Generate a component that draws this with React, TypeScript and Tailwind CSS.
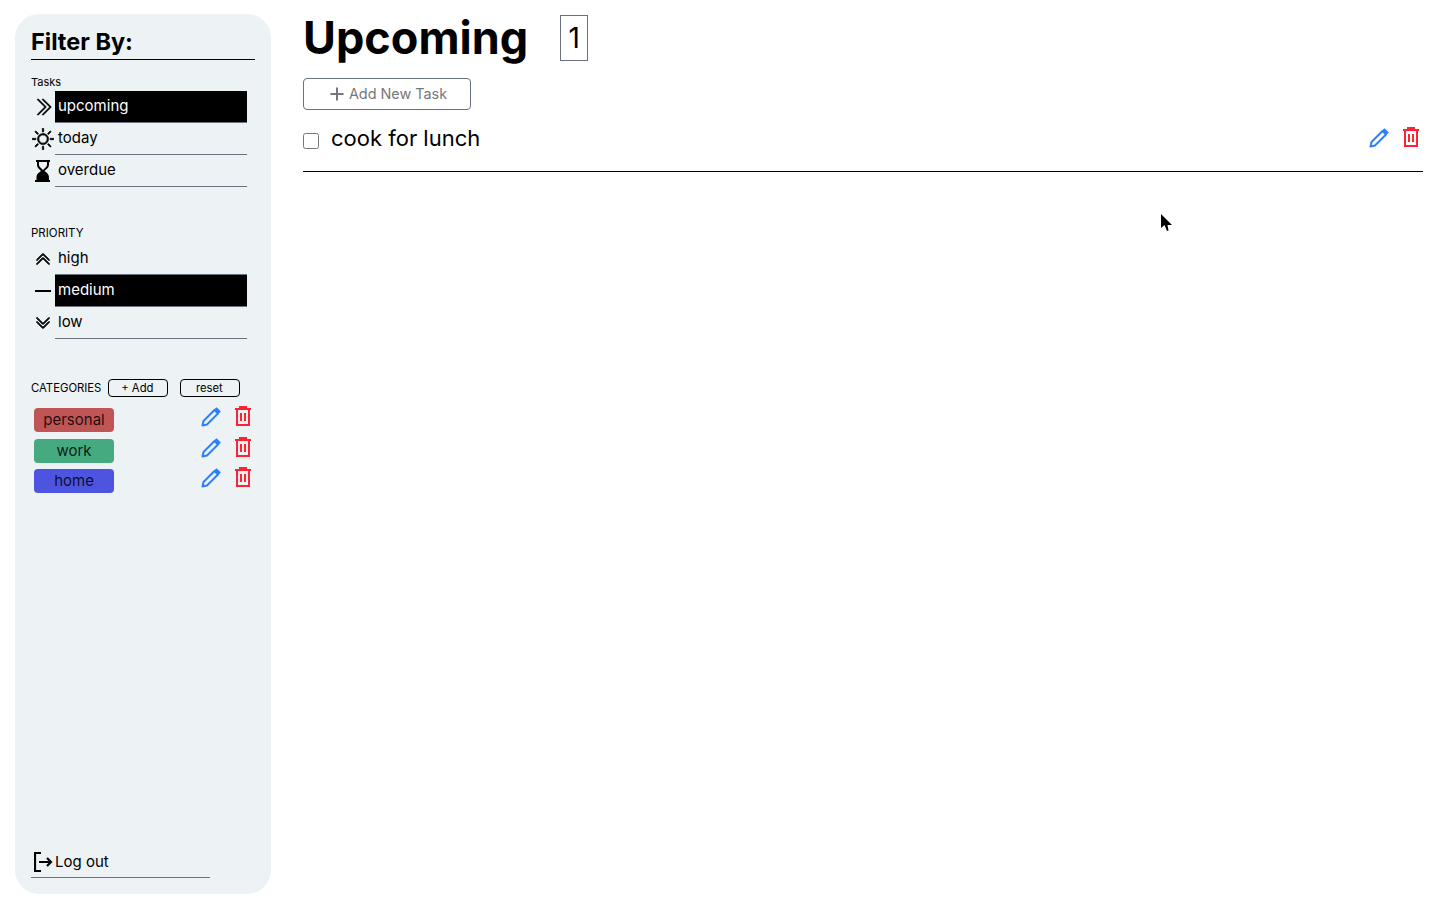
import { Plus } from "lucide-react";
import { BsChevronDoubleDown, BsChevronDoubleRight, BsChevronDoubleUp, BsSun } from "react-icons/bs";
import type { ReactNode } from "react";

const Pencil = () => (
  <svg viewBox="0 0 20 20" className="h-5 w-5 text-[#2b7fff]" fill="none" stroke="currentColor">
    <path d="M1.5 18.500 2.500 14 13.500 3 17 6.500 6 17.500Z" strokeWidth="2" strokeLinejoin="round" />
    <path d="M14 2.500 15.500 1.200 18.800 4.500 17.300 6Z" fill="currentColor" strokeWidth="1.500" />
  </svg>
);

const Trash = () => (
  <svg viewBox="0 0 16 20" className="h-5 w-4 -translate-y-px text-[#ff2233]" fill="none" stroke="currentColor" strokeWidth="2">
    <path d="M0 3h16M5 3V1h6v2M2 3v16h12V3M6 7v8M10 7v8" />
  </svg>
);

const Hourglass = () => (
  <svg viewBox="0 0 16 22" className="h-[22px] w-4" fill="currentColor">
    <path d="M1 0h14v2h-1v3c0 2.500-2.500 4-4.500 6 2 1.500 4.500 3 4.500 6.500V20h1v2H0v-2h1.500v-2.500c0-3.500 2.500-5 4.500-6.500C4 9 2 7.500 2 5V2H1ZM4 2v3c0 1.500 2.500 3.500 4 5 1.500-1.500 4-3.500 4-5V2Z" />
  </svg>
);

const FilterRow = ({ icon, label, active }: { icon: ReactNode; label: string; active?: boolean }) => (
  <div className="flex h-8 items-center">
    <div className="flex w-6 justify-center text-black">{icon}</div>
    <div
      className={
        active
          ? "flex h-8 w-[192px] items-center border-b border-gray-500 bg-black pb-[1px] pl-[3px] text-white"
          : "flex h-8 w-[192px] items-center border-b border-gray-500 pb-[1px] pl-[3px] text-black"
      }
    >
      {label}
    </div>
  </div>
);

const CategoryRow = ({ label, color }: { label: string; color: string }) => (
  <div className="flex h-[30.5px] items-center pl-[3px]">
    <div className={`flex h-6 w-20 items-center justify-center rounded text-[15px] text-black/85 ${color}`}>
      {label}
    </div>
    <div className="ml-[87px] flex items-center gap-[14px] -translate-y-[3px]">
      <Pencil />
      <Trash />
    </div>
  </div>
);

export default function App() {
  return (
    <div className="relative flex h-[909px] bg-white font-['Inter',sans-serif] text-black">
      <aside className="ml-[15px] mt-[14px] flex h-[880px] w-[256px] flex-col rounded-3xl bg-[#edf2f5] pl-4 text-[15px]">
        <h2 className="mr-4 mt-[12px] h-[34px] border-b border-black pt-[2px] text-[23.5px] leading-[28px] font-bold">Filter By:</h2>
        <p className="mt-[15px] text-[11px] leading-[14px]">Tasks</p>
        <div className="mt-[2px]">
          <FilterRow icon={<BsChevronDoubleRight className="text-xl stroke-current stroke-[0.5px]" />} label="upcoming" active />
          <FilterRow icon={<BsSun className="text-[22px] stroke-current stroke-[0.5px]" />} label="today" />
          <FilterRow icon={<Hourglass />} label="overdue" />
        </div>
        <p className="mt-[39px] text-[11.5px] leading-[14px]">PRIORITY</p>
        <div className="mt-[3px]">
          <FilterRow icon={<BsChevronDoubleUp className="text-base stroke-current stroke-[1px]" />} label="high" />
          <FilterRow icon={<div className="h-[2px] w-4 bg-black" />} label="medium" active />
          <FilterRow icon={<BsChevronDoubleDown className="text-base stroke-current stroke-[1px]" />} label="low" />
        </div>
        <div className="mt-10 flex items-center text-[11.3px]">
          <span>CATEGORIES</span>
          <button className="ml-[7px] h-[18px] w-[60px] rounded border border-black pr-[2px]">+ Add</button>
          <button className="ml-3 h-[18px] w-[60px] rounded border border-black pr-[2px]">reset</button>
        </div>
        <div className="mt-2">
          <CategoryRow label="personal" color="bg-[#c05555]" />
          <CategoryRow label="work" color="bg-[#45aa7f]" />
          <CategoryRow label="home" color="bg-[#4d55e0]" />
        </div>
        <div className="mb-4 mt-auto flex h-8 w-[179px] items-center border-b border-gray-500 pl-[3px]">
          <svg viewBox="0 0 19 20" className="h-5 w-[19px]" fill="none" stroke="currentColor" strokeWidth="2.2">
            <path d="M7 1H1v18h6M5 10h12M13 6l4 4-4 4" />
          </svg>
          <span className="ml-[2px] pt-[2px]">Log out</span>
        </div>
      </aside>

      <main className="ml-8 w-[1120px]">
        <div className="mt-[15px] flex items-center">
          <h1 className="text-[45px] leading-[46px] font-bold">Upcoming</h1>
          <div className="ml-8 flex h-[46px] w-7 items-center justify-center border border-gray-500 text-[28px]">1</div>
        </div>
        <button className="mt-[17px] flex h-8 w-[168px] items-center justify-center gap-[2px] rounded border border-gray-500 text-[14.4px] text-[#777]">
          <Plus className="h-5 w-5" strokeWidth={2.4} />
          Add New Task
        </button>
        <div className="mt-[8px] flex h-[54px] items-start border-b border-black pt-1">
          <input type="checkbox" className="mt-[11px] h-4 w-4" />
          <span className="ml-3 text-[22px] leading-8">cook for lunch</span>
          <div className="ml-auto mr-[4px] flex items-center gap-[14px] pt-[6px]">
            <Pencil />
            <Trash />
          </div>
        </div>
      </main>

      <svg viewBox="0 0 12 20" className="absolute left-[1160px] top-[213px] h-5 w-3" fill="#000">
        <path d="M1 1v14l3.500-3 2.500 6 1.500-.5-1-5.500H12Z" />
      </svg>
    </div>
  );
}
